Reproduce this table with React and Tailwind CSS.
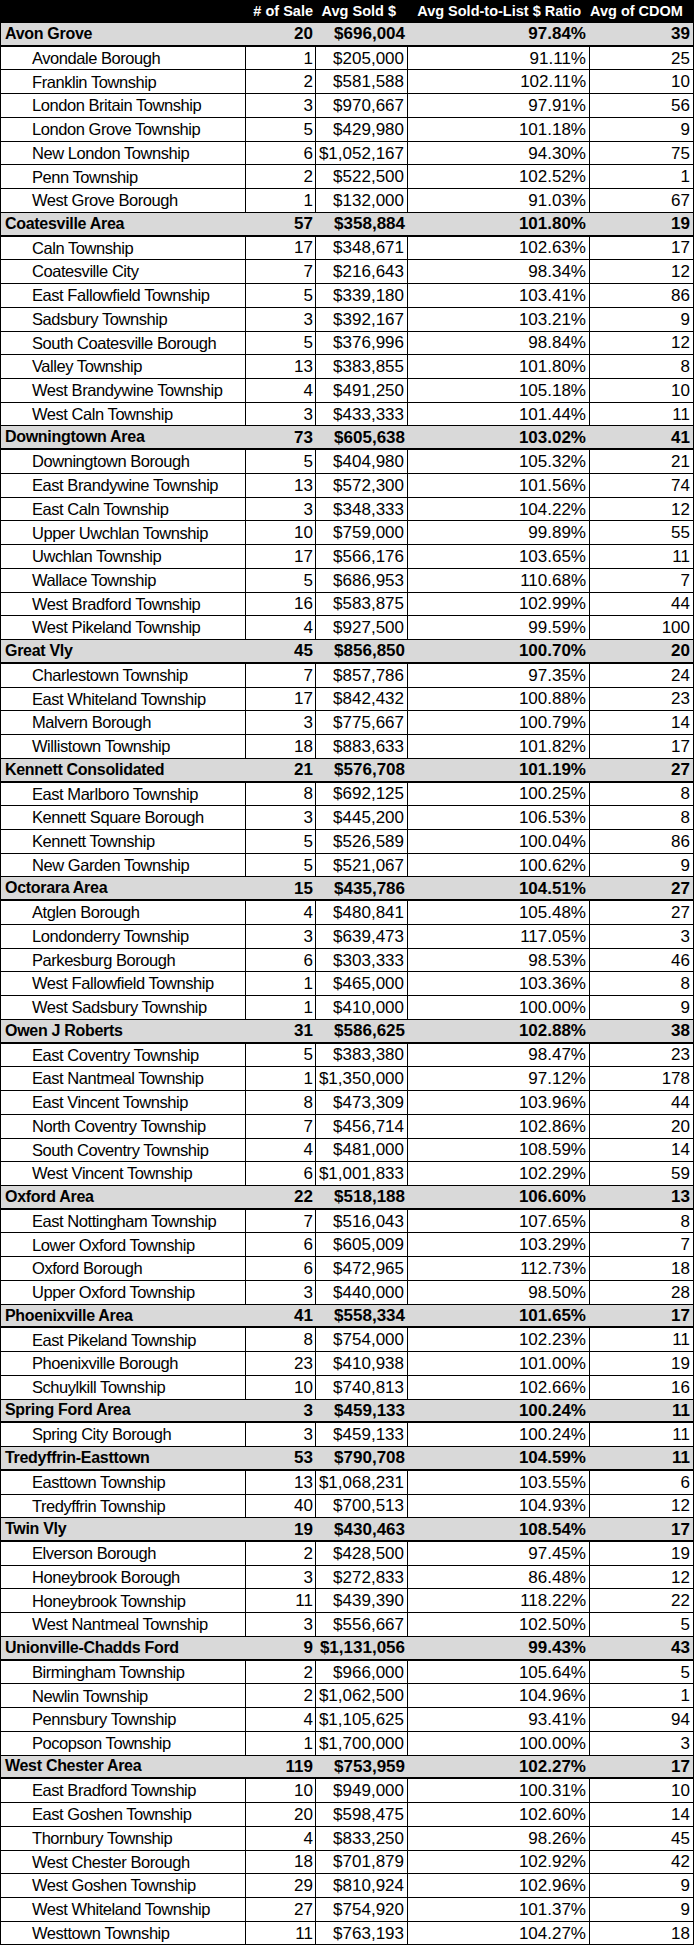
import React from "react";

const groups = [
  ["Avon Grove", 20, "$696,004", "97.84%", 39, [
    ["Avondale Borough", 1, "$205,000", "91.11%", 25],
    ["Franklin Township", 2, "$581,588", "102.11%", 10],
    ["London Britain Township", 3, "$970,667", "97.91%", 56],
    ["London Grove Township", 5, "$429,980", "101.18%", 9],
    ["New London Township", 6, "$1,052,167", "94.30%", 75],
    ["Penn Township", 2, "$522,500", "102.52%", 1],
    ["West Grove Borough", 1, "$132,000", "91.03%", 67],
  ]],
  ["Coatesville Area", 57, "$358,884", "101.80%", 19, [
    ["Caln Township", 17, "$348,671", "102.63%", 17],
    ["Coatesville City", 7, "$216,643", "98.34%", 12],
    ["East Fallowfield Township", 5, "$339,180", "103.41%", 86],
    ["Sadsbury Township", 3, "$392,167", "103.21%", 9],
    ["South Coatesville Borough", 5, "$376,996", "98.84%", 12],
    ["Valley Township", 13, "$383,855", "101.80%", 8],
    ["West Brandywine Township", 4, "$491,250", "105.18%", 10],
    ["West Caln Township", 3, "$433,333", "101.44%", 11],
  ]],
  ["Downingtown Area", 73, "$605,638", "103.02%", 41, [
    ["Downingtown Borough", 5, "$404,980", "105.32%", 21],
    ["East Brandywine Township", 13, "$572,300", "101.56%", 74],
    ["East Caln Township", 3, "$348,333", "104.22%", 12],
    ["Upper Uwchlan Township", 10, "$759,000", "99.89%", 55],
    ["Uwchlan Township", 17, "$566,176", "103.65%", 11],
    ["Wallace Township", 5, "$686,953", "110.68%", 7],
    ["West Bradford Township", 16, "$583,875", "102.99%", 44],
    ["West Pikeland Township", 4, "$927,500", "99.59%", 100],
  ]],
  ["Great Vly", 45, "$856,850", "100.70%", 20, [
    ["Charlestown Township", 7, "$857,786", "97.35%", 24],
    ["East Whiteland Township", 17, "$842,432", "100.88%", 23],
    ["Malvern Borough", 3, "$775,667", "100.79%", 14],
    ["Willistown Township", 18, "$883,633", "101.82%", 17],
  ]],
  ["Kennett Consolidated", 21, "$576,708", "101.19%", 27, [
    ["East Marlboro Township", 8, "$692,125", "100.25%", 8],
    ["Kennett Square Borough", 3, "$445,200", "106.53%", 8],
    ["Kennett Township", 5, "$526,589", "100.04%", 86],
    ["New Garden Township", 5, "$521,067", "100.62%", 9],
  ]],
  ["Octorara Area", 15, "$435,786", "104.51%", 27, [
    ["Atglen Borough", 4, "$480,841", "105.48%", 27],
    ["Londonderry Township", 3, "$639,473", "117.05%", 3],
    ["Parkesburg Borough", 6, "$303,333", "98.53%", 46],
    ["West Fallowfield Township", 1, "$465,000", "103.36%", 8],
    ["West Sadsbury Township", 1, "$410,000", "100.00%", 9],
  ]],
  ["Owen J Roberts", 31, "$586,625", "102.88%", 38, [
    ["East Coventry Township", 5, "$383,380", "98.47%", 23],
    ["East Nantmeal Township", 1, "$1,350,000", "97.12%", 178],
    ["East Vincent Township", 8, "$473,309", "103.96%", 44],
    ["North Coventry Township", 7, "$456,714", "102.86%", 20],
    ["South Coventry Township", 4, "$481,000", "108.59%", 14],
    ["West Vincent Township", 6, "$1,001,833", "102.29%", 59],
  ]],
  ["Oxford Area", 22, "$518,188", "106.60%", 13, [
    ["East Nottingham Township", 7, "$516,043", "107.65%", 8],
    ["Lower Oxford Township", 6, "$605,009", "103.29%", 7],
    ["Oxford Borough", 6, "$472,965", "112.73%", 18],
    ["Upper Oxford Township", 3, "$440,000", "98.50%", 28],
  ]],
  ["Phoenixville Area", 41, "$558,334", "101.65%", 17, [
    ["East Pikeland Township", 8, "$754,000", "102.23%", 11],
    ["Phoenixville Borough", 23, "$410,938", "101.00%", 19],
    ["Schuylkill Township", 10, "$740,813", "102.66%", 16],
  ]],
  ["Spring Ford Area", 3, "$459,133", "100.24%", 11, [
    ["Spring City Borough", 3, "$459,133", "100.24%", 11],
  ]],
  ["Tredyffrin-Easttown", 53, "$790,708", "104.59%", 11, [
    ["Easttown Township", 13, "$1,068,231", "103.55%", 6],
    ["Tredyffrin Township", 40, "$700,513", "104.93%", 12],
  ]],
  ["Twin Vly", 19, "$430,463", "108.54%", 17, [
    ["Elverson Borough", 2, "$428,500", "97.45%", 19],
    ["Honeybrook Borough", 3, "$272,833", "86.48%", 12],
    ["Honeybrook Township", 11, "$439,390", "118.22%", 22],
    ["West Nantmeal Township", 3, "$556,667", "102.50%", 5],
  ]],
  ["Unionville-Chadds Ford", 9, "$1,131,056", "99.43%", 43, [
    ["Birmingham Township", 2, "$966,000", "105.64%", 5],
    ["Newlin Township", 2, "$1,062,500", "104.96%", 1],
    ["Pennsbury Township", 4, "$1,105,625", "93.41%", 94],
    ["Pocopson Township", 1, "$1,700,000", "100.00%", 3],
  ]],
  ["West Chester Area", 119, "$753,959", "102.27%", 17, [
    ["East Bradford Township", 10, "$949,000", "100.31%", 10],
    ["East Goshen Township", 20, "$598,475", "102.60%", 14],
    ["Thornbury Township", 4, "$833,250", "98.26%", 45],
    ["West Chester Borough", 18, "$701,879", "102.92%", 42],
    ["West Goshen Township", 29, "$810,924", "102.96%", 9],
    ["West Whiteland Township", 27, "$754,920", "101.37%", 9],
    ["Westtown Township", 11, "$763,193", "104.27%", 18],
  ]],
];

const cols = "grid grid-cols-[245px_70px_92px_182px_103px]";
const num = "text-[17px]";

function GroupRow({ g }) {
  return (
    <div className={`${cols} h-[23.74px] bg-[#d9d9d9] border-b-2 border-black font-bold items-center`}>
      <div className="pl-[4px] whitespace-nowrap text-[16px] tracking-[-0.3px]">{g[0]}</div>
      <div className={`text-right pr-[3px] ${num}`}>{g[1]}</div>
      <div className={`text-right pr-[3px] whitespace-nowrap ${num}`}>{g[2]}</div>
      <div className={`text-right pr-[4px] ${num}`}>{g[3]}</div>
      <div className={`text-right pr-[3px] ${num}`}>{g[4]}</div>
    </div>
  );
}

function ChildRow({ r }) {
  return (
    <div className={`${cols} h-[23.74px] border-b border-black`}>
      <div className="pl-[31px] border-r border-black flex items-center whitespace-nowrap text-[16.5px] tracking-[-0.45px]">{r[0]}</div>
      <div className={`pr-[2px] border-r border-black flex items-center justify-end ${num}`}>{r[1]}</div>
      <div className={`pr-[3px] border-r border-black flex items-center justify-end whitespace-nowrap ${num}`}>{r[2]}</div>
      <div className={`pr-[3px] border-r border-black flex items-center justify-end ${num}`}>{r[3]}</div>
      <div className={`pr-[3px] flex items-center justify-end ${num}`}>{r[4]}</div>
    </div>
  );
}

export default function App() {
  return (
    <div className="w-[696px] bg-white text-black font-['Liberation_Sans',Arial,sans-serif] text-[16px] leading-none">
      <div className="w-[694px] border-x border-black">
        <div className={`${cols} h-[23px] bg-black text-white font-bold text-[14.5px] items-center`}>
          <div></div>
          <div className="text-right pr-[3px] whitespace-nowrap">{"# of Sale"}</div>
          <div className="text-right pr-[12px] whitespace-nowrap">Avg Sold $</div>
          <div className="text-right pr-[9px] whitespace-nowrap">Avg Sold-to-List $ Ratio</div>
          <div className="text-right pr-[11px] whitespace-nowrap">Avg of CDOM</div>
        </div>
        {groups.map((g) => (
          <React.Fragment key={g[0]}>
            <GroupRow g={g} />
            {g[5].map((r) => (
              <ChildRow key={r[0]} r={r} />
            ))}
          </React.Fragment>
        ))}
      </div>
    </div>
  );
}
